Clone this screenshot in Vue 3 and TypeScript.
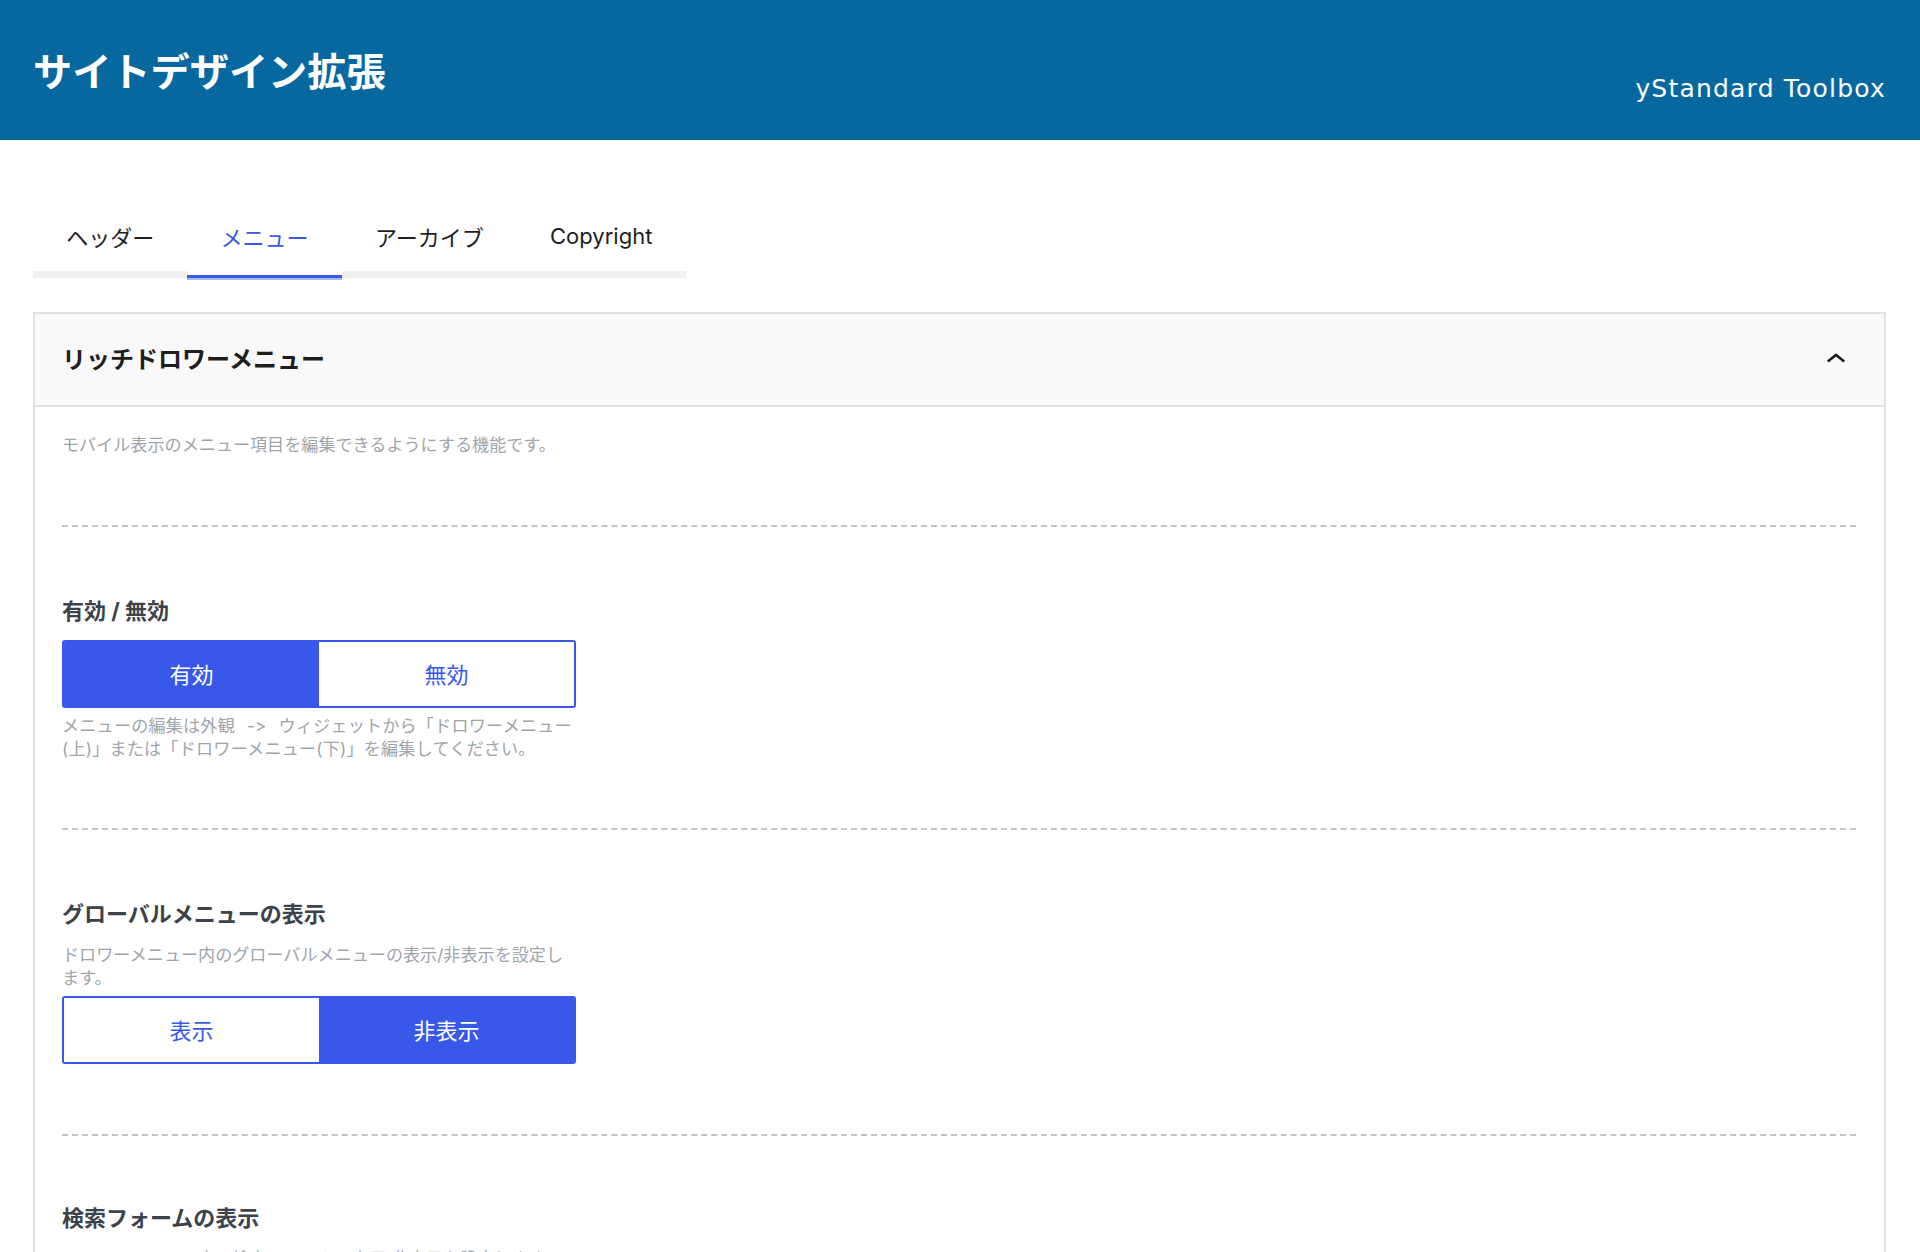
<script setup lang="ts">
interface Choice {
  label: string
  active: boolean
}

interface Field {
  title: string
  before?: string
  after?: string
  choices?: Choice[]
}

const tabs = ['ヘッダー', 'メニュー', 'アーカイブ', 'Copyright']

const fields: Field[] = [
  {
    title: '有効 / 無効',
    after: 'メニューの編集は外観 -> ウィジェットから「ドロワーメニュー(上)」または「ドロワーメニュー(下)」を編集してください。',
    choices: [
      { label: '有効', active: true },
      { label: '無効', active: false }
    ]
  },
  {
    title: 'グローバルメニューの表示',
    before: 'ドロワーメニュー内のグローバルメニューの表示/非表示を設定します。',
    choices: [
      { label: '表示', active: false },
      { label: '非表示', active: true }
    ]
  },
  {
    title: '検索フォームの表示',
    before: 'ドロワーメニュー内の検索フォームの表示/非表示を設定します。',
    choices: [
      { label: '表示', active: true },
      { label: '非表示', active: false }
    ]
  }
]
</script>

<template>
  <div class="page">
    <header class="top">
      <h1 class="top-title">サイトデザイン拡張</h1>
      <span class="brand">yStandard Toolbox</span>
    </header>

    <main class="content">
      <nav class="tabs">
        <button
          v-for="(tab, index) in tabs"
          :key="tab"
          class="tab"
          :class="{ 'is-active': index === 1 }"
        >
          {{ tab }}
        </button>
      </nav>

      <section class="panel">
        <div class="panel-head">
          <h2 class="panel-title">リッチドロワーメニュー</h2>
          <svg class="chevron" width="24" height="24" viewBox="0 0 24 24" aria-hidden="true">
            <path d="M3.8 15.5 12 9 20.2 15.5" fill="none" stroke="#1e1e1e" stroke-width="2.6" />
          </svg>
        </div>

        <div class="panel-body">
          <p class="intro">モバイル表示のメニュー項目を編集できるようにする機能です。</p>

          <div v-for="field in fields" :key="field.title" class="field">
            <h3 class="field-title">{{ field.title }}</h3>
            <div class="field-inner">
              <p v-if="field.before" class="hint hint-before">{{ field.before }}</p>
              <div class="segments">
                <button
                  v-for="choice in field.choices"
                  :key="choice.label"
                  class="segment"
                  :class="{ 'is-on': choice.active }"
                >
                  {{ choice.label }}
                </button>
              </div>
              <p v-if="field.after" class="hint hint-after">{{ field.after }}</p>
            </div>
          </div>
        </div>
      </section>
    </main>
  </div>
</template>

<style>
html,
body {
  margin: 0;
  background: #fff;
}
</style>

<style scoped>
.page {
  height: 1252px;
  overflow: hidden;
  font-family: Inter, "Noto Sans CJK JP", sans-serif;
  font-variant-ligatures: none;
  font-feature-settings: "calt" 0;
  color: #1e1e1e;
}

.top {
  height: 140px;
  box-sizing: border-box;
  padding: 0 34px 0 33px;
  background: #06689f;
  display: flex;
  justify-content: space-between;
  color: #fff;
}

.top-title {
  margin: 50px 0 0;
  font-size: 39.2px;
  line-height: 44px;
  font-weight: 700;
}

.brand {
  margin-top: 72px;
  font-family: "DejaVu Sans", sans-serif;
  font-size: 25px;
  letter-spacing: 1.2px;
  line-height: 34px;
}

.content {
  padding: 0 34px 0 33px;
}

.tabs {
  display: inline-flex;
  margin-top: 67px;
  border-bottom: 7px solid #f0f0f0;
  vertical-align: top;
}

.tab {
  height: 57px;
  margin-bottom: -7px;
  padding: 0 33.2px 11px;
  border: 0;
  border-bottom: 3px solid transparent;
  background: none;
  font: inherit;
  font-size: 22px;
  color: #1e1e1e;
  box-sizing: content-box;
}

.tab.is-active {
  color: #3858e9;
  background: #fff;
  border-bottom-color: #3858e9;
  box-shadow: 0 2px 0 #a9b6ef;
}

.panel {
  margin-top: 34px;
  border: 2px solid #e2e2e2;
  border-bottom: 0;
}

.panel-head {
  height: 93px;
  box-sizing: border-box;
  padding: 0 36px 4px 27px;
  border-bottom: 2px solid #e2e2e2;
  background: #f9f9f9;
  display: flex;
  align-items: center;
  justify-content: space-between;
}

.panel-title {
  margin: 0;
  font-size: 24px;
  font-weight: 700;
}

.panel-body {
  padding: 26px 28px 0 27px;
}

.intro,
.hint {
  margin: 0;
  font-size: 17.1px;
  line-height: 23px;
  color: #a0a5aa;
}

.intro {
  padding-bottom: 69px;
}

.field {
  border-top: 2px dashed #c3c4c7;
  padding: 70px 0 70px;
}

.field:last-child {
  padding-top: 68px;
}

.field-title {
  margin: 0 0 15px;
  font-size: 22px;
  line-height: 28px;
  font-weight: 700;
  color: #3c434a;
}

.field-inner {
  width: 514px;
}

.segments {
  display: flex;
  height: 68px;
  border: 2px solid #3858e9;
  border-radius: 3px;
  box-sizing: border-box;
  overflow: hidden;
}

.segment {
  flex: 1;
  padding: 0 0 3px;
  border: 0;
  background: #fff;
  font: inherit;
  font-size: 22px;
  color: #3858e9;
}

.segment.is-on {
  background: #3858e9;
  color: #fff;
}

.hint-before {
  margin-top: 2px;
  margin-bottom: 7px;
}

.hint-after {
  margin-top: 6px;
  margin-bottom: -2px;
  letter-spacing: 0.2px;
  word-spacing: 7px;
}
</style>
